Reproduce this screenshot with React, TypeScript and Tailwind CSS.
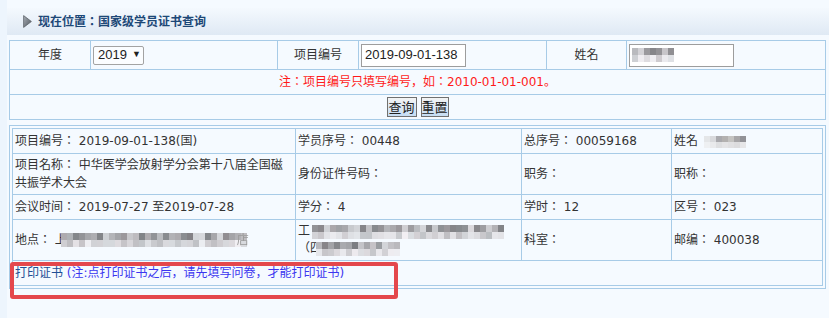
import React from "react";

const FONT = '"DejaVu Sans", "Noto Sans CJK JP", sans-serif';

function grays(n: number, seed: number, light = false): string[] {
  const out: string[] = [];
  let s = seed;
  for (let i = 0; i < n; i++) {
    s = (s * 9301 + 49297) % 233280;
    const r = s / 233280;
    const base = light ? 190 + Math.floor(r * 50) : 125 + Math.floor(r * 95);
    const tint = Math.floor(((s >> 3) % 7) - 3);
    out.push(`rgb(${base + tint},${base},${base + 4})`);
  }
  return out;
}

const Mosaic = ({ rows, w = 6, h = 7, className = "" }: { rows: string[][]; w?: number; h?: number; className?: string }) => (
  <span className={`inline-flex flex-col align-middle blur-[0.6px] ${className}`}>
    {rows.map((r, i) => (
      <span key={i} className="flex">
        {r.map((c, j) => (
          <span key={j} style={{ width: w, height: h, background: c }} />
        ))}
      </span>
    ))}
  </span>
);

const Cell = ({ children, className = "" }: { children?: React.ReactNode; className?: string }) => (
  <div className={`bg-[#f5faff] flex items-center pl-[2px] text-[12px] text-[#333] whitespace-nowrap ${className}`}>{children}</div>
);

export default function App() {
  return (
    <div className="relative w-[829px] min-h-[318px] bg-[#f5faff] flex" style={{ fontFamily: FONT }}>
      <div className="w-[7px] shrink-0 bg-[#edf5fd]" />
      <div className="flex-1 pt-[8px]">
        {/* header */}
        <div className="h-[27px] bg-gradient-to-b from-[#f4f9fe] to-[#dfe9f4] flex items-center pl-[16px] gap-[6px]">
          <svg width="9" height="13" viewBox="0 0 9 13">
            <defs>
              <linearGradient id="ar" x1="0" y1="0" x2="1" y2="1">
                <stop offset="0" stopColor="#a9afb6" />
                <stop offset="1" stopColor="#4f565e" />
              </linearGradient>
            </defs>
            <path d="M0.6 0.6 L8.4 6.5 L0.6 12.4 Z" fill="url(#ar)" stroke="#5d636a" strokeWidth="0.8" />
          </svg>
          <span className="text-[12px] font-bold text-[#1d4877] leading-none">现在位置：国家级学员证书查询</span>
        </div>

        {/* search table */}
        <div className="ml-[2px] mt-[5px] w-[817px] grid grid-cols-[80px_186px_80px_187px_79px_198px] grid-rows-[28px_24px_24px] gap-px p-px bg-[#a7cbe7] text-[12px] text-[#333]">
          <div className="bg-[#f5faff] flex items-center justify-center">年度</div>
          <div className="bg-[#f5faff] flex items-center pl-[2px]">
            <div className="w-[51px] h-[19px] border border-[#a3a3a3] rounded-[2px] bg-[#fbfdff] flex items-center pl-[4px] gap-[5px] text-[13px] text-[#222]" style={{ fontFamily: '"Liberation Sans", Arial, sans-serif' }}>
              <span>2019</span>
              <span className="text-[9px]">▼</span>
            </div>
          </div>
          <div className="bg-[#f5faff] flex items-center justify-center">项目编号</div>
          <div className="bg-[#f5faff] flex items-center pl-[2px]">
            <div className="w-[105px] h-[23px] border border-[#9d9d9d] bg-white flex items-center pl-[3px] text-[13px] text-[#222]" style={{ fontFamily: '"Liberation Sans", Arial, sans-serif' }}>
              2019-09-01-138
            </div>
          </div>
          <div className="bg-[#f5faff] flex items-center justify-center">姓名</div>
          <div className="bg-[#f5faff] flex items-center pl-[2px]">
            <div className="w-[105px] h-[23px] border border-[#9d9d9d] bg-white flex items-center pl-[2px]">
              <Mosaic rows={[grays(7, 11), grays(7, 29, true)]} w={6} h={7} />
            </div>
          </div>
          <div className="col-span-6 bg-[#f5faff] flex items-center justify-center text-[#ff1a1a]">
            注：项目编号只填写编号，如：2010-01-01-001。
          </div>
          <div className="col-span-6 bg-[#f5faff] flex items-center justify-center gap-[4px]">
            <button className="w-[30px] h-[20px] border border-[#707070] bg-gradient-to-b from-[#f4f4f4] to-[#c6ddf3] text-[13px] text-[#222] leading-none flex items-center justify-center">查询</button>
            <button className="w-[28px] h-[20px] border border-[#707070] bg-gradient-to-b from-[#f4f4f4] to-[#c6ddf3] text-[13px] text-[#222] leading-none flex items-center justify-center">重置</button>
          </div>
        </div>

        {/* result table */}
        <div className="ml-[2px] mt-[5px] w-[817px] border border-[#a7cbe7] p-[2px]">
          <div className="grid grid-cols-[282px_225px_149px_150px] grid-rows-[24px_40px_24px_40px_24px] gap-px p-px bg-[#a7cbe7]">
            <Cell>项目编号： 2019-09-01-138(国)</Cell>
            <Cell>学员序号： 00448</Cell>
            <Cell>总序号： 00059168</Cell>
            <Cell>
              姓名
              <span className="ml-[6px]">
                <Mosaic rows={[["#e4e6e8", "#d8d9dc", "#a9a9ad", "#b3b1b0", "#c4c3c1", "#a7a6a8", "#929297"], ["#eef0f2", "#e9eaec", "#dedfe1", "#e4e4e6", "#e0e0e2", "#dcdcde", "#e6e6e8"]]} w={6} h={6} />
              </span>
            </Cell>

            <Cell className="leading-[18px]">
              <div>
                项目名称： 中华医学会放射学分会第十八届全国磁
                <br />
                共振学术大会
              </div>
            </Cell>
            <Cell>身份证件号码：</Cell>
            <Cell>职务：</Cell>
            <Cell>职称：</Cell>

            <Cell>会议时间： 2019-07-27 至2019-07-28</Cell>
            <Cell>学分： 4</Cell>
            <Cell>学时： 12</Cell>
            <Cell>区号： 023</Cell>

            <Cell>
              地点： 上
              <Mosaic className="-ml-[6px]" rows={[grays(31, 7), grays(31, 53, true)]} w={6} h={7} />
              <span className="text-[#9a9a9a] -ml-[10px] blur-[0.4px]">店</span>
            </Cell>
            <Cell className="leading-[17px]">
              <div className="flex flex-col">
                <div className="flex items-center">
                  工
                  <Mosaic className="ml-[2px]" rows={[grays(32, 101), grays(32, 131, true)]} w={6} h={7} />
                </div>
                <div className="flex items-center">
                  （四
                  <Mosaic className="-ml-[6px]" rows={[grays(14, 211), grays(14, 241, true)]} w={6} h={7} />
                </div>
              </div>
            </Cell>
            <Cell>科室：</Cell>
            <Cell>邮编： 400038</Cell>

            <Cell className="col-span-4">
              <span>
                <span className="text-[#1f4f95]">打印证书</span>
                <span className="text-[#3b36f0]"> (注:点打印证书之后，请先填写问卷，才能打印证书)</span>
              </span>
            </Cell>
          </div>
        </div>
      </div>

      {/* annotation box */}
      <div className="absolute left-[10px] top-[262px] w-[388px] h-[37px] border-[4px] border-[#e4474c] rounded-[3px]" />
    </div>
  );
}
